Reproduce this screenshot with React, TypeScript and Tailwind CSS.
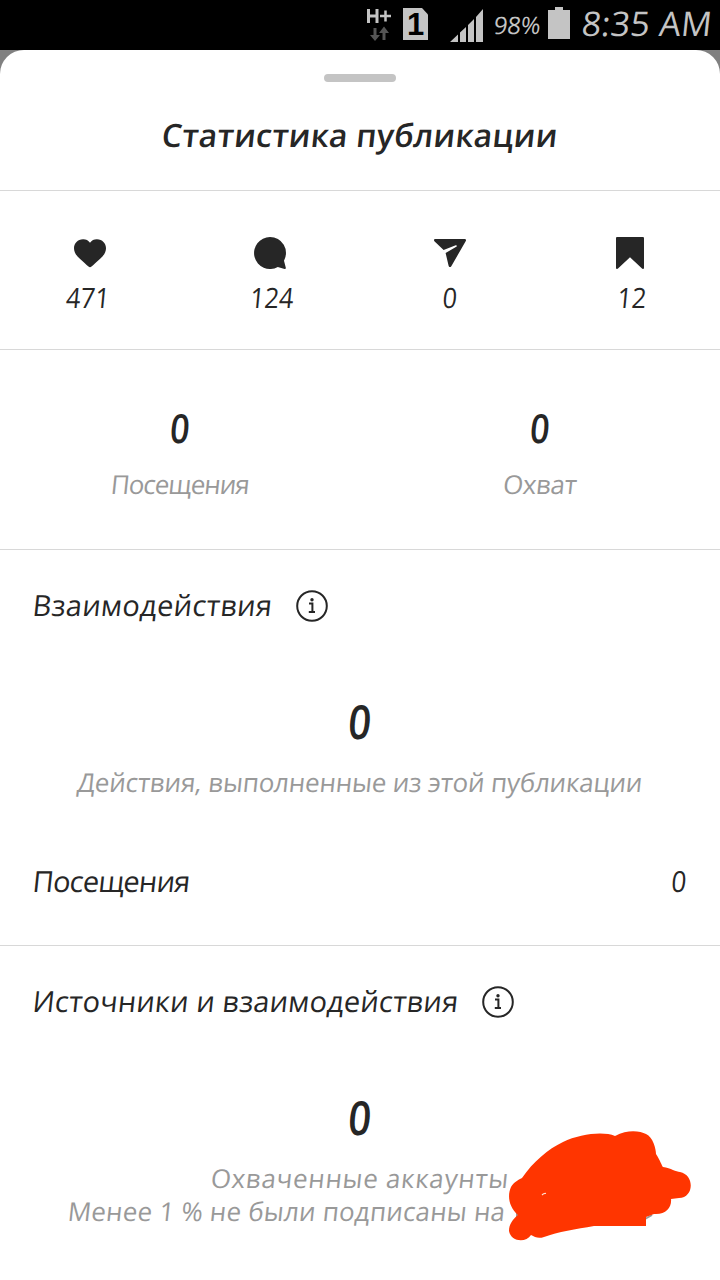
import React from 'react'

const actions = [
  { id: 'likes', value: '471', icon: HeartIcon, shift: '-left-0.5' },
  { id: 'comments', value: '124', icon: CommentIcon, shift: 'left-0.5' },
  { id: 'shares', value: '0', icon: SendIcon, shift: 'left-0' },
  { id: 'saves', value: '12', icon: BookmarkIcon, shift: 'left-0.5' }
]

const totals = [
  { label: 'Посещения', tracking: 'tracking-[-1px]' },
  { label: 'Охват', tracking: 'tracking-[-0.4px]' }
]

function HeartIcon() {
  return (
    <svg width="32" height="32" viewBox="0 0 32 32" fill="#262626">
      <path d="M16 5.700C17.800 3.300 20.200 2.200 23 2.300c5.200.100 9 4 9 9 0 4.200-2.300 7.400-6.100 10.600-3 2.600-6.100 5.500-8.400 7.700-1 .900-2 .900-3 0-2.300-2.200-5.400-5.100-8.400-7.700C2.300 18.700 0 15.500 0 11.300c0-5 3.800-8.900 9-9 2.800-.100 5.200 1 7 3.400z" />
    </svg>
  )
}

function CommentIcon() {
  return (
    <svg width="32" height="32" viewBox="0 0 32 32" fill="#262626">
      <path d="M16 0a16 16 0 1 0 7.800 30l6.800 1.900c.9.200 1.400-.3 1.200-1.200L30 23.700A16 16 0 0 0 16 0z" />
    </svg>
  )
}

function SendIcon() {
  return (
    <svg width="32" height="32" viewBox="0 0 32 32" fill="#262626">
      <path d="M1.300 2h29.400c1.200 0 1.700 1 1.100 2L17.300 29.200c-.8 1.300-2.400 1.100-2.700-.4L11.600 16 22.300 9.800c1-.6.500-1.900-.6-1.500L9.600 12.900.4 4.200C-.4 3.300.1 2 1.300 2z" />
    </svg>
  )
}

function BookmarkIcon() {
  return (
    <svg width="32" height="32" viewBox="0 0 32 32" fill="#262626">
      <path d="M3.300 0h25.400c.8 0 1.300.5 1.300 1.300v29.400c0 1.200-1.200 1.700-2 .9L16 20.300 4 31.600c-.8.800-2 .3-2-.9V1.300C2 .5 2.500 0 3.300 0z" />
    </svg>
  )
}

function InfoIcon() {
  return (
    <svg width="32" height="32" viewBox="0 0 32 32" fill="none" stroke="#262626" strokeWidth="2">
      <circle cx="16" cy="16" r="14.800" />
      <path d="M13 13.500H16.400V22M12.800 22H19" />
      <circle cx="16" cy="9.800" r="1.700" fill="#262626" stroke="none" />
    </svg>
  )
}

function StatusBar() {
  return (
    <div className="flex h-[50px] items-start bg-black pl-[366px] text-[#c4c4c4]">
      <svg className="mt-[7px] shrink-0" width="26" height="36" viewBox="0 0 26 36" fill="none">
        <path d="M2.500 2V16M11 2V16M2 9H11" stroke="#c4c4c4" strokeWidth="3" />
        <path d="M14 9H25M19.500 3.500V14.500" stroke="#c4c4c4" strokeWidth="2.500" />
        <path d="M7.500 21h3v7h3.500L9 34l-5-6h3.500zM16.500 33h3v-7H23l-5-6.500-5 6.500h3.500z" fill="#555" />
      </svg>
      <div className="ml-[11px] mt-2 flex h-8 w-[25px] shrink-0 items-center justify-center bg-[#c4c4c4] font-['Liberation_Sans'] text-[31px] font-bold leading-none text-black [clip-path:polygon(0_0,76%_0,100%_20%,100%_100%,0_100%)]">
        1
      </div>
      <svg className="ml-[22px] mt-[9px] shrink-0" width="34" height="33" viewBox="0 0 34 33" fill="#c4c4c4">
        <path d="M0 33 8 25.500V33zM10 33V23.500L16 18v15zM18 33V16l6-6v23zM26 33V8l7-8v33z" />
      </svg>
      <div className="ml-[10px] mt-[9px] w-[46px] -skew-x-6 whitespace-nowrap text-[24px] leading-8 tracking-[-0.2px]">
        98%
      </div>
      <svg className="ml-[8px] mt-[7px] shrink-0" width="22" height="32" viewBox="0 0 22 32" fill="#c4c4c4">
        <path d="M7 0h8v3h7v29H0V3h7z" />
      </svg>
      <div className="ml-3 mt-[3px] -skew-x-6 whitespace-nowrap text-[34px] leading-10 tracking-[0.3px]">8:35 AM</div>
    </div>
  )
}

function SectionTitle({ title, tracking }: { title: string; tracking: string }) {
  return (
    <div className="flex h-8 items-center gap-6 pl-[33px]">
      <h2 className={`-mt-0.5 -skew-x-6 whitespace-nowrap text-[29px] font-medium leading-8 ${tracking}`}>{title}</h2>
      <InfoIcon />
    </div>
  )
}

function BigZero() {
  return <div className="-skew-x-6 scale-x-85 text-center text-[47px] font-semibold leading-[48px]">0</div>
}

export default function App() {
  return (
    <div className="h-[1280px] w-[720px] overflow-hidden bg-[#808080] font-['Open_Sans',sans-serif] text-[#262626]">
      <StatusBar />
      <main className="h-[1230px] rounded-t-[24px] bg-white">
        {/* Sheet header */}
        <header className="flex h-[141px] flex-col items-center border-b border-[#d8d8d8] pt-6">
          <div className="h-2 w-[72px] rounded-full bg-[#c4c4c4]" />
          <h1 className="mt-[33px] -skew-x-6 whitespace-nowrap text-[32px] font-semibold leading-10 tracking-[0.2px]">
            Статистика публикации
          </h1>
        </header>

        {/* Reactions */}
        <section className="grid h-[159px] grid-cols-4 border-b border-[#d8d8d8] pt-[46px]">
          {actions.map(({ id, value, icon: Icon, shift }) => (
            <div key={id} className="flex flex-col items-center">
              <Icon />
              <span className={`relative mt-3 -skew-x-6 scale-x-90 text-[28px] font-medium leading-8 ${shift}`}>{value}</span>
            </div>
          ))}
        </section>

        {/* Visits and reach */}
        <section className="grid h-[200px] grid-cols-2 border-b border-[#d8d8d8] pt-[58px] text-center">
          {totals.map(({ label, tracking }) => (
            <div key={label}>
              <div className="-skew-x-6 scale-x-85 text-[40px] font-semibold leading-10">0</div>
              <div className={`mt-5 -skew-x-6 text-[26px] leading-8 text-[#999] ${tracking}`}>{label}</div>
            </div>
          ))}
        </section>

        {/* Interactions */}
        <section className="h-[396px] border-b border-[#d8d8d8] pt-10">
          <SectionTitle title="Взаимодействия" tracking="tracking-[0.24px]" />
          <div className="mt-[75px]">
            <BigZero />
          </div>
          <p className="mt-[21px] -skew-x-6 whitespace-nowrap text-center text-[26px] leading-8 tracking-[-0.2px] text-[#999]">
            Действия, выполненные из этой публикации
          </p>
          <div className="mt-[67px] flex justify-between pl-[33px] pr-[33px] text-[29px] leading-8">
            <span className="-skew-x-6 font-medium tracking-[-0.8px]">Посещения</span>
            <span className="origin-right -skew-x-6 scale-x-90 font-medium">0</span>
          </div>
        </section>

        {/* Sources */}
        <section className="relative pt-10">
          <SectionTitle title="Источники и взаимодействия" tracking="tracking-[0.12px]" />
          <div className="mt-[75px]">
            <BigZero />
          </div>
          <div className="mx-auto mt-[21px] w-[584px] text-[26px] leading-[33px] text-[#999]">
            <p className="-skew-x-6 text-center tracking-[0.68px]">Охваченные аккаунты</p>
            <p className="-skew-x-6 whitespace-nowrap tracking-[0.18px]">Менее 1 % не были подписаны на</p>
          </div>
          <svg className="absolute left-[500px] top-[174px]" width="200" height="130" viewBox="500 1120 200 130">
            <path d="M517 1213v6M645 1219l7-4" stroke="#999" strokeWidth="2" fill="none" />
            <path
              d="M522 1178C533 1162 548 1149 563 1142C580 1134 603 1131 615 1136C628 1129 640 1131 646 1134C653 1137 656 1149 656 1154C660 1160 662 1166 663 1167C671 1168 676 1172 680 1172C695 1175 694 1198 679 1198L671 1199C672 1207 666 1215 654 1214L646 1217V1226H594C576 1229 558 1232 544 1237C538 1239 535 1237 531 1235C526 1243 511 1242 509 1231C509 1224 513 1219 518 1215C509 1207 507 1196 511 1187C514 1182 518 1180 522 1178Z"
              fill="#ff3500"
            />
            <path d="M542 1195q2-2 4-1.500" stroke="#ffe0d0" strokeWidth="1.200" fill="none" />
          </svg>
        </section>
      </main>
    </div>
  )
}
